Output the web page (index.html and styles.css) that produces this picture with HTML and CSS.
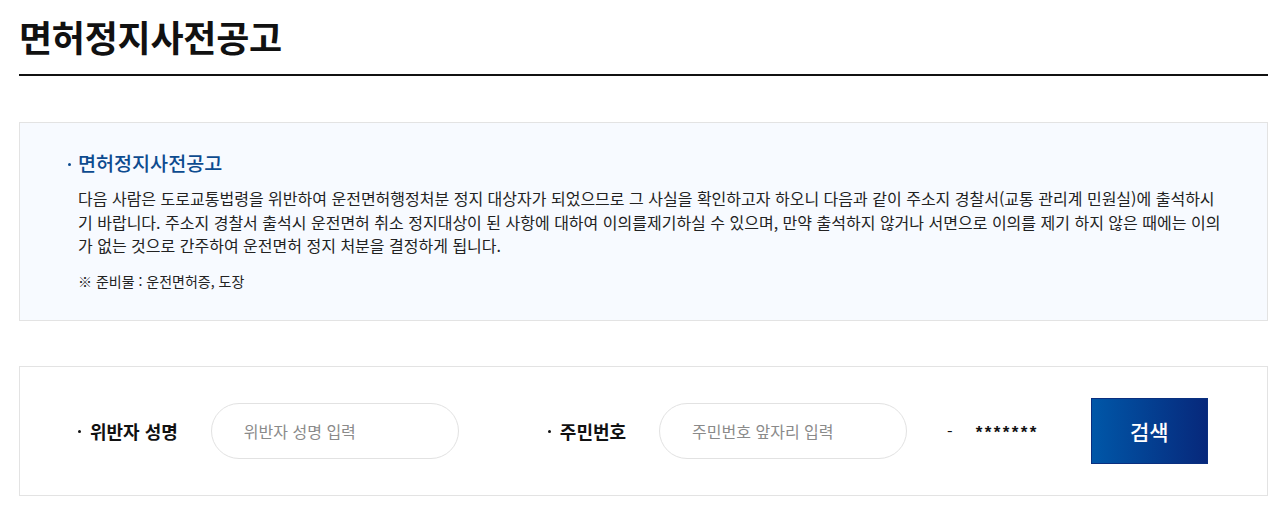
FILE: index.html
```html
<!DOCTYPE html>
<html lang="ko">
<head>
<meta charset="utf-8">
<title>면허정지사전공고</title>
<link rel="stylesheet" href="styles.css">
</head>
<body>
<div class="page">
  <h1 class="page-title">면허정지사전공고</h1>

  <section class="notice">
    <h2 class="notice-title">면허정지사전공고</h2>
    <p class="notice-text">다음 사람은 도로교통법령을 위반하여 운전면허행정처분 정지 대상자가 되었으므로 그 사실을 확인하고자 하오니 다음과 같이 주소지 경찰서(교통 관리계 민원실)에 출석하시기 바랍니다. 주소지 경찰서 출석시 운전면허 취소 정지대상이 된 사항에 대하여 이의를제기하실 수 있으며, 만약 출석하지 않거나 서면으로 이의를 제기 하지 않은 때에는 이의가 없는 것으로 간주하여 운전면허 정지 처분을 결정하게 됩니다.</p>
    <p class="notice-note">※ 준비물 : 운전면허증, 도장</p>
  </section>

  <form class="search" onsubmit="return false;">
    <label class="search-label" for="name">위반자 성명</label>
    <input class="search-input" id="name" type="text" placeholder="위반자 성명 입력">
    <label class="search-label search-label-id" for="jumin">주민번호</label>
    <input class="search-input" id="jumin" type="text" placeholder="주민번호 앞자리 입력">
    <span class="search-dash">-</span>
    <span class="search-mask">*******</span>
    <button class="search-btn" type="submit">검색</button>
  </form>
</div>
</body>
</html>
```

FILE: styles.css
```css
* {
  box-sizing: border-box;
}

html, body {
  margin: 0;
  padding: 0;
  background: #fff;
}

body {
  font-family: "Noto Sans CJK KR", "Noto Sans", sans-serif;
  color: #222;
}

.page {
  width: 1249px;
  margin-left: 19px;
}

.page-title {
  margin: 0;
  padding-top: 12px;
  height: 76px;
  font-size: 36px;
  line-height: 48px;
  font-weight: 700;
  color: #111;
  letter-spacing: -0.25px;
  border-bottom: 2px solid #111;
}

.notice {
  margin-top: 46px;
  background: #f7faff;
  border: 1px solid #e3e3e3;
  padding: 27px 42px 29px 48px;
}

.notice-title {
  margin: 0;
  display: flex;
  align-items: center;
  font-size: 19.6px;
  line-height: 26px;
  font-weight: 500;
  color: #0d4b8f;
}

.notice-title::before {
  content: "";
  width: 3px;
  height: 3px;
  border-radius: 50%;
  background: #0d4b8f;
  margin-right: 7px;
  margin-top: 2px;
}

.notice-text {
  margin: 11px 0 0 10px;
  font-size: 16px;
  line-height: 23.5px;
  color: #222;
}

.notice-note {
  margin: 13px 0 0 10px;
  font-size: 14px;
  line-height: 20px;
  color: #222;
}

.search {
  margin-top: 45px;
  height: 130px;
  border: 1px solid #e3e3e3;
  display: flex;
  align-items: center;
  padding-left: 58px;
}

.search-label {
  display: flex;
  align-items: center;
  font-size: 18px;
  font-weight: 700;
  color: #111;
}

.search-label::before {
  content: "";
  width: 3px;
  height: 3px;
  border-radius: 50%;
  background: #111;
  margin-right: 9px;
  margin-top: 2px;
}

.search-label-id {
  margin-left: 89px;
}

.search-input {
  width: 248px;
  height: 56px;
  margin-left: 33px;
  border: 1px solid #e2e2e2;
  border-radius: 28px;
  padding: 0 0 0 32px;
  font-family: "Noto Sans CJK KR", "Noto Sans", sans-serif;
  font-size: 16px;
  color: #222;
  background: #fff;
  outline: none;
}

.search-input::placeholder {
  color: #8a8a8a;
}

.search-dash {
  margin-left: 40px;
  font-size: 16px;
  color: #111;
}

.search-mask {
  margin-left: 23px;
  font-family: "Liberation Sans", sans-serif;
  font-size: 17px;
  font-weight: 700;
  letter-spacing: 2.4px;
  color: #111;
  padding-top: 5px;
}

.search-btn {
  margin-left: 52px;
  width: 117px;
  height: 66px;
  border: 1px solid #0a2f7f;
  background: linear-gradient(to right, #0057a8, #07287b);
  color: #fff;
  font-family: "Noto Sans CJK KR", "Noto Sans", sans-serif;
  font-size: 21px;
  font-weight: 500;
  cursor: pointer;
}
```
